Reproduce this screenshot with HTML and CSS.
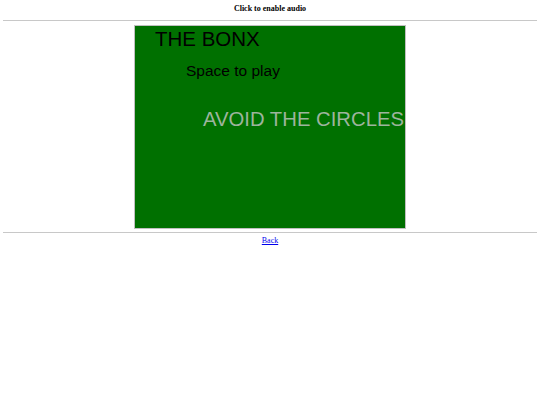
FILE: index.html
```html
<!DOCTYPE html>
<html>
<head>
<meta charset="utf-8">
<link rel="stylesheet" href="styles.css">
</head>
<body>
<div class="audio">Click to enable audio</div>
<hr class="rule">
<div class="stage">
  <div class="game">
    <span class="title">THE BONX</span>
    <span class="hint">Space to play</span>
    <span class="avoid">AVOID THE CIRCLES</span>
  </div>
</div>
<hr class="rule">
<div class="back"><a href="#">Back</a></div>
</body>
</html>
```

FILE: styles.css
```css
html, body {
  margin: 0;
  padding: 0;
  background: #fff;
}
body {
  padding: 0 3px;
  font-family: "Liberation Serif", "Times New Roman", serif;
}
.audio {
  text-align: center;
  font-weight: bold;
  font-size: 8px;
  line-height: 11px;
  padding-top: 3px;
}
.rule {
  margin: 0;
  border: 0;
  border-top: 1px solid #c8c8c8;
  height: 0;
}
.audio + .rule {
  margin-top: 6px;
}
.stage {
  display: flex;
  justify-content: center;
  padding: 4px 0 3px;
}
.game {
  position: relative;
  width: 270px;
  height: 202px;
  background: #007000;
  border: 1px solid #c0c0c0;
  overflow: hidden;
  font-family: "Liberation Sans", Arial, sans-serif;
}
.game span {
  position: absolute;
  white-space: nowrap;
  line-height: 1;
}
.title {
  left: 20px;
  top: 3px;
  font-size: 20.5px;
  color: #000;
}
.hint {
  left: 51px;
  top: 37px;
  font-size: 15.5px;
  color: #000;
}
.avoid {
  left: 68px;
  top: 83px;
  font-size: 20.3px;
  color: #9db49d;
}
.back {
  text-align: center;
  font-size: 8px;
  padding-top: 3px;
}
.back a {
  color: #0000ee;
}
```
